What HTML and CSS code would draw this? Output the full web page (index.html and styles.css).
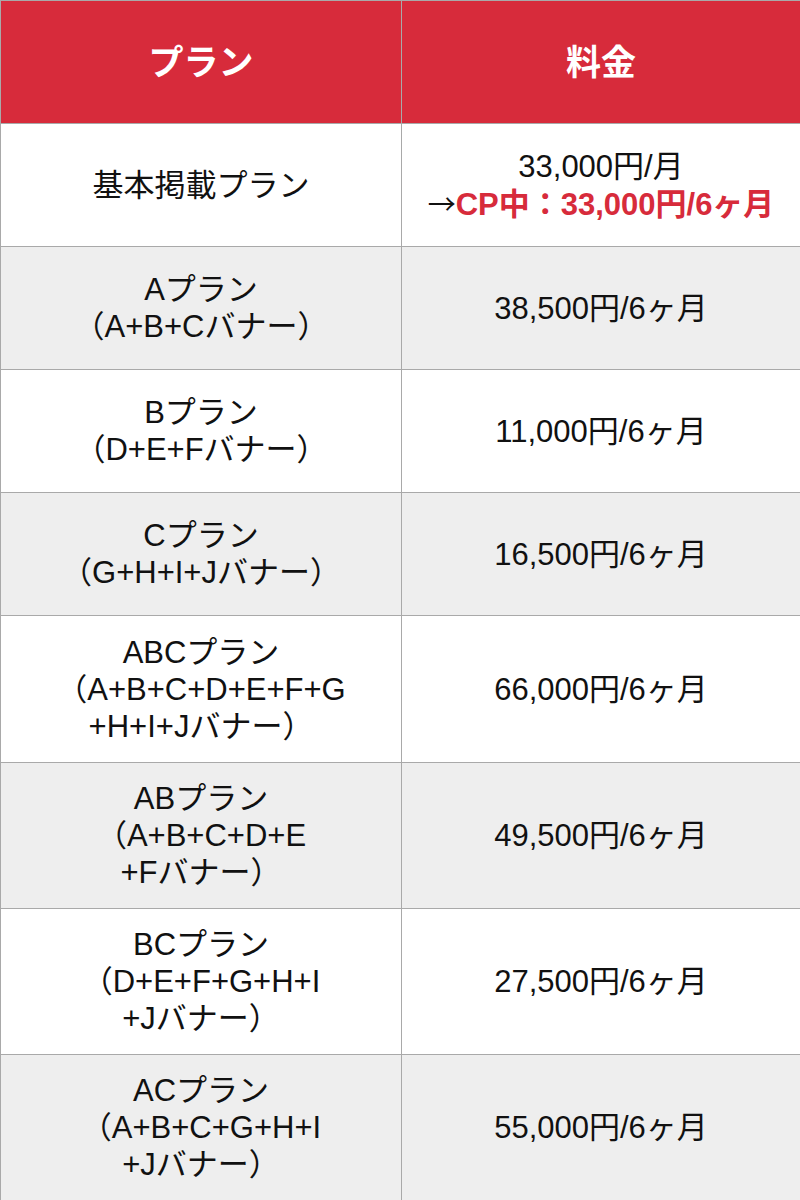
FILE: index.html
```html
<!DOCTYPE html>
<html lang="ja">
<head>
<meta charset="utf-8">
<title>料金表</title>
<link rel="stylesheet" href="styles.css">
</head>
<body>
<table class="price-table">
  <colgroup><col class="col-plan"><col class="col-price"></colgroup>
  <thead>
    <tr class="row-head"><th>プラン</th><th>料金</th></tr>
  </thead>
  <tbody>
    <tr class="row-std"><td>基本掲載プラン</td><td>33,000円/月<br><span class="arrow">→</span><span class="cp">CP中：33,000円/6ヶ月</span></td></tr>
    <tr class="row-std alt"><td>Aプラン<br>（A+B+Cバナー）</td><td>38,500円/6ヶ月</td></tr>
    <tr class="row-std"><td>Bプラン<br>（D+E+Fバナー）</td><td>11,000円/6ヶ月</td></tr>
    <tr class="row-std alt"><td>Cプラン<br>（G+H+I+Jバナー）</td><td>16,500円/6ヶ月</td></tr>
    <tr class="row-tall first"><td>ABCプラン<br>（A+B+C+D+E+F+G<br>+H+I+Jバナー）</td><td>66,000円/6ヶ月</td></tr>
    <tr class="row-tall alt"><td>ABプラン<br>（A+B+C+D+E<br>+Fバナー）</td><td>49,500円/6ヶ月</td></tr>
    <tr class="row-tall"><td>BCプラン<br>（D+E+F+G+H+I<br>+Jバナー）</td><td>27,500円/6ヶ月</td></tr>
    <tr class="row-tall alt"><td>ACプラン<br>（A+B+C+G+H+I<br>+Jバナー）</td><td>55,000円/6ヶ月</td></tr>
  </tbody>
</table>
</body>
</html>
```

FILE: styles.css
```css
html, body {
  margin: 0;
  padding: 0;
  background: #ffffff;
}
.price-table {
  width: 800px;
  height: 1200px;
  border-collapse: collapse;
  table-layout: fixed;
  font-family: "Liberation Sans", Arial, "Noto Sans CJK JP", sans-serif;
  color: #111111;
}
.col-plan { width: 401px; }
.col-price { width: 399px; }
.price-table th,
.price-table td {
  border: 1px solid #a9a9a9;
  text-align: center;
  vertical-align: middle;
  padding: 0;
  font-size: 31px;
  line-height: 37px;
}
.row-head th {
  height: 122px;
  background: #d72b3b;
  color: #ffffff;
  font-weight: bold;
  font-size: 35px;
}
.row-std td { height: 122px; }
.row-tall.first td { height: 146px; }
.row-tall td { height: 145px; }
.alt td { background: #eeeeee; }
.arrow {
  font-family: "Noto Sans CJK JP", sans-serif;
  font-size: 28px;
}
.cp {
  color: #d72b3b;
  font-weight: bold;
}
```
